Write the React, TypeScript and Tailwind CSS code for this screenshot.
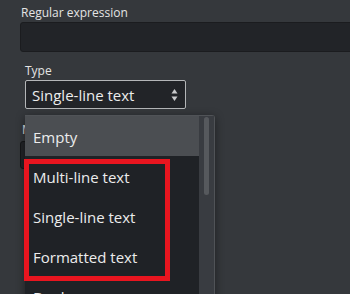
const options = ['Empty', 'Multi-line text', 'Single-line text', 'Formatted text', 'Boolean']

export default function App() {
  return (
    <div
      className="relative h-[294px] w-[350px] overflow-hidden bg-[#35383c] text-[#e4e4e4]"
      style={{ fontFamily: '"Open Sans", "Noto Sans", sans-serif' }}
    >
      {/* Regular expression */}
      <div className="pl-[20px] pt-[5px]">
        <div className="ml-[1px] h-[16px] text-[12px] leading-[16px]">Regular expression</div>
        <div className="mt-[1px] h-[30px] w-[400px] rounded-[3px] border border-[#1b1c1f] bg-[#222428]" />
      </div>

      {/* Type */}
      <div className="pl-[25px] pt-[11px]">
        <div className="h-[16px] text-[12px] leading-[16px]">Type</div>
        <div className="mt-[1px] flex h-[29px] w-[161px] items-center justify-between rounded-[2px] border border-[#b4b6b8] bg-[#222428] pl-[6px] pr-[7px]">
          <span className="text-[15px] leading-[20px] text-[#ececec]">Single-line text</span>
          <svg width="7" height="14" viewBox="0 0 7 14">
            <path d="M3.5 1 L6.5 5.5 L0.5 5.5 Z" fill="#c9cacc" />
            <path d="M3.5 13 L6.5 8.5 L0.5 8.5 Z" fill="#c9cacc" />
          </svg>
        </div>
      </div>

      {/* field hidden behind the open list */}
      <div className="pl-[20px] pt-[13px]">
        <div className="ml-[2px] h-[16px] text-[12px] leading-[16px]">Max length</div>
        <div className="mt-[3px] h-[28px] w-[180px] rounded-[3px] border border-[#151618] bg-[#222428]" />
      </div>

      {/* Open dropdown */}
      <div className="absolute left-[25px] top-[115px] flex h-[200px] w-[190px] rounded-tr-[3px] border-t border-r border-[#505357] bg-[#1f2226] shadow-[0_2px_10px_rgba(0,0,0,0.45)]">
        <div className="w-[174px]">
          {options.map((o, i) => (
            <div
              key={o}
              className={`flex h-[40px] items-center pl-[8px] pt-[2px] text-[15px] leading-[20px] text-[#ececec] ${
                i === 0 ? 'bg-[#4b4e52]' : ''
              }`}
            >
              {o}
            </div>
          ))}
        </div>
        <div className="w-[15px] bg-[#393c41] pl-[5px] pt-[1px]">
          <div className="h-[78px] w-[5px] rounded-full bg-[#56595d]" />
        </div>
      </div>

      {/* highlight box */}
      <div className="absolute left-[24px] top-[159px] h-[122px] w-[146px] border-[5px] border-[#e8151f]" />
    </div>
  )
}
